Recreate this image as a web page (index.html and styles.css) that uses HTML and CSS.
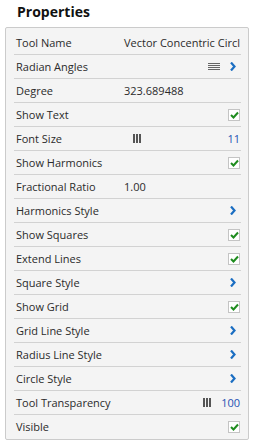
FILE: index.html
```html
<!DOCTYPE html>
<html>
<head>
<meta charset="utf-8">
<link rel="stylesheet" href="styles.css">
</head>
<body>
<h1 class="title">Properties</h1>
<div class="panel">
  <div class="row"><span class="label">Tool Name</span><span class="value">Vector Concentric Circl</span></div>
  <div class="row"><span class="label">Radian Angles</span><span class="spacer"></span>
    <svg class="menu" width="12" height="8" viewBox="0 0 12 8"><path d="M0 0.5H12M0 2.5H12M0 4.5H12M0 6.5H12" stroke="#666" stroke-width="1"/></svg>
    <svg class="chev" width="6" height="9" viewBox="0 0 6 9"><path d="M1 0.5L4.5 4.5L1 8.5" fill="none" stroke="#1b6ec2" stroke-width="2.2"/></svg></div>
  <div class="row"><span class="label">Degree</span><span class="value">323.689488</span></div>
  <div class="row"><span class="label">Show Text</span><span class="spacer"></span><span class="check"><svg width="9" height="8" viewBox="0 0 9 8"><path d="M1 4L3.5 6.5L8 1.5" fill="none" stroke="#1e8c1e" stroke-width="2"/></svg></span></div>
  <div class="row"><span class="label">Font Size</span><span class="slider"><span class="handle" style="margin-left:9px"><i></i><i></i><i></i></span></span><span class="num">11</span></div>
  <div class="row"><span class="label">Show Harmonics</span><span class="spacer"></span><span class="check"><svg width="9" height="8" viewBox="0 0 9 8"><path d="M1 4L3.5 6.5L8 1.5" fill="none" stroke="#1e8c1e" stroke-width="2"/></svg></span></div>
  <div class="row"><span class="label">Fractional Ratio</span><span class="value">1.00</span></div>
  <div class="row"><span class="label">Harmonics Style</span><span class="spacer"></span><svg class="chev" width="6" height="9" viewBox="0 0 6 9"><path d="M1 0.5L4.5 4.5L1 8.5" fill="none" stroke="#1b6ec2" stroke-width="2.2"/></svg></div>
  <div class="row"><span class="label">Show Squares</span><span class="spacer"></span><span class="check"><svg width="9" height="8" viewBox="0 0 9 8"><path d="M1 4L3.5 6.5L8 1.5" fill="none" stroke="#1e8c1e" stroke-width="2"/></svg></span></div>
  <div class="row"><span class="label">Extend Lines</span><span class="spacer"></span><span class="check"><svg width="9" height="8" viewBox="0 0 9 8"><path d="M1 4L3.5 6.5L8 1.5" fill="none" stroke="#1e8c1e" stroke-width="2"/></svg></span></div>
  <div class="row"><span class="label">Square Style</span><span class="spacer"></span><svg class="chev" width="6" height="9" viewBox="0 0 6 9"><path d="M1 0.5L4.5 4.5L1 8.5" fill="none" stroke="#1b6ec2" stroke-width="2.2"/></svg></div>
  <div class="row"><span class="label">Show Grid</span><span class="spacer"></span><span class="check"><svg width="9" height="8" viewBox="0 0 9 8"><path d="M1 4L3.5 6.5L8 1.5" fill="none" stroke="#1e8c1e" stroke-width="2"/></svg></span></div>
  <div class="row"><span class="label">Grid Line Style</span><span class="spacer"></span><svg class="chev" width="6" height="9" viewBox="0 0 6 9"><path d="M1 0.5L4.5 4.5L1 8.5" fill="none" stroke="#1b6ec2" stroke-width="2.2"/></svg></div>
  <div class="row"><span class="label">Radius Line Style</span><span class="spacer"></span><svg class="chev" width="6" height="9" viewBox="0 0 6 9"><path d="M1 0.5L4.5 4.5L1 8.5" fill="none" stroke="#1b6ec2" stroke-width="2.2"/></svg></div>
  <div class="row"><span class="label">Circle Style</span><span class="spacer"></span><svg class="chev" width="6" height="9" viewBox="0 0 6 9"><path d="M1 0.5L4.5 4.5L1 8.5" fill="none" stroke="#1b6ec2" stroke-width="2.2"/></svg></div>
  <div class="row"><span class="label">Tool Transparency</span><span class="slider"><span class="handle" style="margin-left:79px"><i></i><i></i><i></i></span></span><span class="num">100</span></div>
  <div class="row"><span class="label">Visible</span><span class="spacer"></span><span class="check"><svg width="9" height="8" viewBox="0 0 9 8"><path d="M1 4L3.5 6.5L8 1.5" fill="none" stroke="#1e8c1e" stroke-width="2"/></svg></span></div>
</div>
</body>
</html>
```

FILE: styles.css
```css
html, body {
  margin: 0;
  padding: 0;
  background: #fff;
}
body {
  font-family: "Open Sans", "Liberation Sans", sans-serif;
  color: #2b2b2b;
  width: 253px;
  height: 448px;
  overflow: hidden;
}
.title {
  margin: 0;
  padding: 2px 0 0 17px;
  height: 27px;
  box-sizing: border-box;
  font-size: 14px;
  font-weight: 700;
  line-height: 20px;
  color: #111;
}
.panel {
  margin: 0 4px 0 5px;
  background: #f4f4f4;
  border: 1px solid #cbcbcb;
  border-radius: 2px;
  padding: 3px 7px 1px 8px;
}
.row {
  display: flex;
  align-items: center;
  height: 23px;
  border-bottom: 1px solid #d2d2d2;
  padding: 0 1px 0 2px;
  font-size: 11px;
  white-space: nowrap;
}
.row:last-child {
  border-bottom: none;
}
.label {
  width: 108px;
  flex: none;
}
.value {
  flex: 1;
  min-width: 0;
}
.spacer {
  flex: 1;
}
.menu {
  margin-right: 10px;
  display: block;
}
.chev {
  display: block;
  margin-right: 4px;
}
.check {
  width: 10px;
  height: 10px;
  border: 1px solid #c4c4c4;
  background: #fff;
  display: flex;
  align-items: center;
  justify-content: center;
}
.check svg {
  display: block;
}
.slider {
  flex: 1;
  display: flex;
  align-items: center;
}
.handle {
  display: flex;
  gap: 1px;
  height: 9px;
}
.handle i {
  width: 2px;
  height: 9px;
  background: #555;
}
.num {
  color: #2451b3;
}
```
